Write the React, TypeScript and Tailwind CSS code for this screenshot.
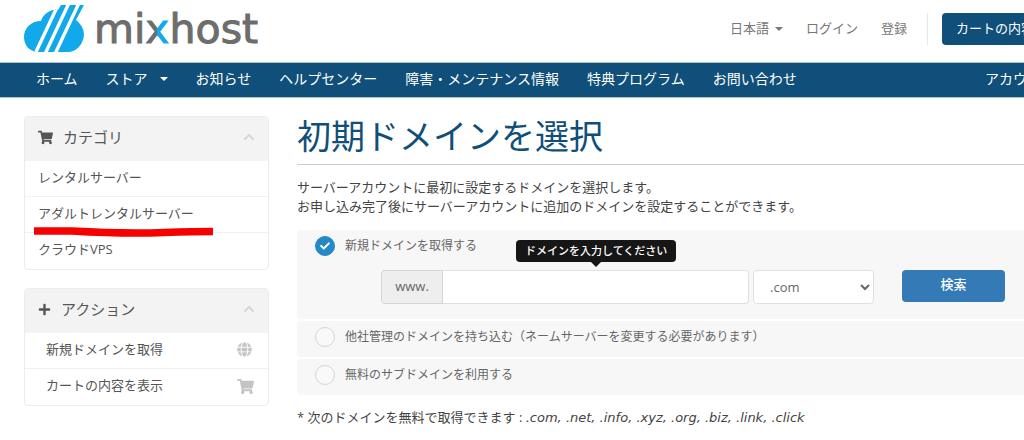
import { useState } from 'react';
import { FaCheck, FaChevronUp, FaGlobe, FaPlus, FaShoppingCart } from 'react-icons/fa';
import clsx from 'clsx';

const navItems = [
    { label: 'ホーム' },
    { label: 'ストア', dropdown: true },
    { label: 'お知らせ' },
    { label: 'ヘルプセンター' },
    { label: '障害・メンテナンス情報' },
    { label: '特典プログラム' },
    { label: 'お問い合わせ' },
];

const categories = [
    { label: 'レンタルサーバー' },
    { label: 'アダルトレンタルサーバー', marked: true },
    { label: 'クラウドVPS' },
];

const options = [
    { id: 'register', label: '新規ドメインを取得する' },
    { id: 'owndomain', label: '他社管理のドメインを持ち込む（ネームサーバーを変更する必要があります）' },
    { id: 'subdomain', label: '無料のサブドメインを利用する' },
];

const tlds = ['.com', '.net', '.info', '.xyz', '.org', '.biz', '.link', '.click'];

function Caret() {
    return <span className="inline-block border-x-4 border-t-4 border-x-transparent border-t-current" />
}

function Logo() {
    return (
        <a href="#" className="flex items-center gap-2.5">
            <svg viewBox="0 0 60 48" className="h-12 w-[60px]" aria-hidden="true">
                <defs>
                    <clipPath id="cloud">
                        <path d="M13 47C5 46 0 40 0 32C0 23 7 16 17 16C20 8 27 4 34 5L37 0H60L52 15C57 19 60 24 60 30C59 40 52 47 44 47Z" />
                    </clipPath>
                </defs>
                <g clipPath="url(#cloud)">
                    <rect width="60" height="48" fill="#12a9ea" />
                    <path d="M35 -2L11 49M45 -2L21 49M55 -2L31 49" stroke="#fff" strokeWidth="3.4" />
                </g>
            </svg>
            <span className="font-['DejaVu_Sans',sans-serif] text-[41px] leading-12 text-[#6d6d6d] [-webkit-text-stroke:1px]">
                mi<span className="bg-linear-to-r from-[#6d6d6d] from-50% to-[#12a9ea] to-50% bg-clip-text text-transparent">x</span>host
            </span>
        </a>
    )
}

function Header() {
    return (
        <header>
            <div className="flex h-[62px] items-center justify-between px-6 pb-1">
                <Logo />
                <div className="flex items-center text-[13px] text-[#777]">
                    <button type="button" className="flex items-center gap-1.5">日本語 <Caret /></button>
                    <a href="#" className="ml-[23px]">ログイン</a>
                    <a href="#" className="ml-[23px]">登録</a>
                    <span className="mr-3.5 ml-5 h-8 border-l border-gray-200" />
                    <a href="#" className="rounded-sm bg-[#0f4f79] px-3.5 py-1.5 text-white">カートの内容を表示</a>
                </div>
            </div>
            <nav className="flex h-9 items-center justify-between border-y border-[#a9c3d3] bg-[#0f4f79] px-9 pb-0.5 text-sm text-white">
                <ul className="flex gap-7">
                    {navItems.map((item) => (
                        <li key={item.label}>
                            <a href="#" className="flex items-center gap-3">{item.label}{item.dropdown && <Caret />}</a>
                        </li>
                    ))}
                </ul>
                <a href="#" className="flex items-center gap-3">アカウント <Caret /></a>
            </nav>
        </header>
    )
}

function Panel({ icon, title, children }: { icon: React.ReactNode; title: string; children: React.ReactNode }) {
    return (
        <section className="overflow-hidden rounded border border-[#ececec] bg-white">
            <h2 className="flex h-11 items-center bg-[#f3f3f3] px-[13px] pb-1 text-[15px] text-[#555]">
                {icon}
                <span className="ml-2.5 flex-1">{title}</span>
                <FaChevronUp className="size-3 text-[#d5d5d5]" />
            </h2>
            <ul className="text-[13px] text-[#555]">{children}</ul>
        </section>
    )
}

function Sidebar() {
    return (
        <aside className="flex w-[245px] shrink-0 flex-col gap-[18px]">
            <Panel icon={<FaShoppingCart className="size-[15px]" />} title="カテゴリ">
                {categories.map((c) => (
                    <li key={c.label} className="relative h-9 border-b border-[#f0f0f0] last:border-b-0">
                        <a href="#" className="flex h-full items-center px-[13px] pb-0.5">{c.label}</a>
                        {c.marked && (
                            <svg viewBox="0 0 180 10" className="absolute top-[30px] left-[9px] z-10 h-2.5 w-[180px]" aria-hidden="true">
                                <path d="M0 4H38Q90 7 130 5.5Q160 4.5 179 4.5" fill="none" stroke="#f60000" strokeWidth="7.5" />
                            </svg>
                        )}
                    </li>
                ))}
            </Panel>
            <Panel icon={<FaPlus className="size-[13px]" />} title="アクション">
                <li className="h-9 border-b border-[#f0f0f0]">
                    <a href="#" className="flex h-full items-center justify-between pr-4 pb-0.5 pl-[21px]">新規ドメインを取得 <FaGlobe className="size-[15px] text-[#c4c4c4]" /></a>
                </li>
                <li className="h-9">
                    <a href="#" className="flex h-full items-center justify-between pr-3.5 pb-0.5 pl-[21px]">カートの内容を表示 <FaShoppingCart className="size-[17px] text-[#c4c4c4]" /></a>
                </li>
            </Panel>
        </aside>
    )
}

function DomainForm() {
    return (
        <form className="flex pt-2 pr-[82px] pb-[15px] pl-[84px] text-[13px] text-[#666]" onSubmit={(e) => e.preventDefault()}>
            <div className="relative flex h-[34px] flex-1">
                <label htmlFor="sld" className="flex w-[62px] items-center justify-center rounded-l border border-[#d5d5d5] bg-[#eee]">www.</label>
                <input id="sld" type="text" className="min-w-0 flex-1 rounded-r border border-l-0 border-[#e0e0e0] bg-white px-3 outline-none" />
                <div role="tooltip" className="absolute bottom-full left-[135px] mb-2 rounded bg-[#161616] px-[9px] text-[11px] leading-[22px] font-medium whitespace-nowrap text-white">
                    ドメインを入力してください
                    <span className="absolute top-full left-1/2 -translate-x-1/2 border-x-[5px] border-t-[5px] border-x-transparent border-t-[#161616]" />
                </div>
            </div>
            <select aria-label="TLD" className="ml-1 h-[34px] w-[121px] rounded border border-[#e0e0e0] bg-white pl-3">
                {tlds.map((tld) => <option key={tld}>{tld}</option>)}
            </select>
            <button type="submit" className="ml-7 h-8 w-[103px] rounded bg-[#337ab7] pb-0.5 font-medium text-white">検索</button>
        </form>
    )
}

function DomainOptions() {
    const [selected, setSelected] = useState('register')

    return (
        <div className="mt-3.5 flex flex-col gap-0.5">
            {options.map((o) => (
                <div key={o.id} className={clsx('rounded bg-[#f7f7f7]', selected !== o.id && 'pb-1')}>
                    <label className="flex h-8 items-center gap-2.5 pl-[18px] text-xs text-[#666]">
                        <span className="relative flex size-5">
                            <input
                                type="radio"
                                name="domainoption"
                                checked={selected === o.id}
                                onChange={() => setSelected(o.id)}
                                className={clsx('size-5 appearance-none rounded-full border', selected === o.id ? 'border-[#2489c5] bg-[#2489c5]' : 'border-[#d5d5d5] bg-[#f9f9f9]')}
                            />
                            {selected === o.id && <FaCheck className="pointer-events-none absolute inset-0 m-auto size-2.5 text-white" />}
                        </span>
                        {o.label}
                    </label>
                    {selected === o.id && o.id === 'register' && <DomainForm />}
                </div>
            ))}
        </div>
    )
}

export default function App() {
    return (
        <div className="overflow-x-hidden bg-white font-['Open_Sans','Noto_Sans_CJK_JP',sans-serif]">
            <div className="min-w-[1111px]">
                <Header />
                <div className="flex gap-7 px-6 pt-[18px]">
                    <Sidebar />
                    <main className="min-w-0 flex-1 text-[13px] text-[#444]">
                        <h1 className="border-b border-[#ccc] pb-2 text-[34px] leading-10 text-[#0f4f79]">初期ドメインを選択</h1>
                        <p className="mt-[13px] leading-[19px]">
                            サーバーアカウントに最初に設定するドメインを選択します。<br />
                            お申し込み完了後にサーバーアカウントに追加のドメインを設定することができます。
                        </p>
                        <DomainOptions />
                        <p className="mt-[13px] leading-[19px]">
                            * 次のドメインを無料で取得できます : <em className="font-['DejaVu_Sans',sans-serif]">{tlds.join(', ')}</em>
                        </p>
                    </main>
                </div>
            </div>
        </div>
    )
}
